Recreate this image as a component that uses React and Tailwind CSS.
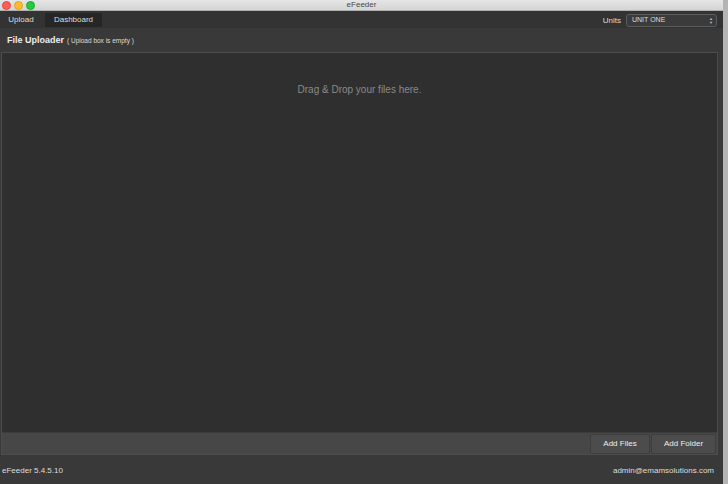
import React from 'react';

const font = { fontFamily: '"Helvetica Neue", "Liberation Sans", Arial, sans-serif' };

const TrafficLights = () => (
    <div className="flex items-center gap-[3px] pl-[2px]">
        <span className="w-[9px] h-[9px] rounded-full bg-[#fc5f57] border border-[#df4744]" />
        <span className="w-[9px] h-[9px] rounded-full bg-[#fdbc2e] border border-[#dea123]" />
        <span className="w-[9px] h-[9px] rounded-full bg-[#28c840] border border-[#1aab29]" />
    </div>
);

export default function App() {
    return (
        <div className="flex w-[728px] h-[484px] bg-[#b4b4b4] overflow-hidden" style={font}>
            <div className="flex flex-col w-[723px] h-full bg-[#393939]">
                {/* Title bar */}
                <div className="relative h-[11px] flex items-center bg-gradient-to-b from-[#e6e6e6] to-[#d4d4d4] border-b border-[#b0b0b0]">
                    <TrafficLights />
                    <div className="absolute inset-0 flex items-center justify-center text-[8px] leading-none text-[#4a4a4a]">eFeeder</div>
                </div>

                {/* Tabs + units */}
                <div className="h-[17px] flex items-center justify-between bg-[#333333] pr-[6px]">
                    <div className="flex items-center h-full gap-[3px]">
                        <div className="h-full w-[42px] flex items-center justify-center text-[8px] text-[#dddddd]">Upload</div>
                        <div className="h-[14px] w-[57px] flex items-center justify-center text-[8px] text-[#dddddd] bg-[#262626]">Dashboard</div>
                    </div>
                    <div className="flex items-center gap-[5px] pt-[2px]">
                        <span className="text-[8px] text-[#dddddd]">Units</span>
                        <div className="w-[91px] h-[13px] rounded-[3px] border border-[#5c5c5c] bg-[#3b3b3b] flex items-center justify-between pl-[5px] pr-[3px]">
                            <span className="text-[7px] text-[#dddddd]">UNIT ONE</span>
                            <span className="flex flex-col items-center leading-none text-[4px] text-[#bbbbbb]">
                                <span>▲</span>
                                <span>▼</span>
                            </span>
                        </div>
                    </div>
                </div>

                {/* Header */}
                <div className="h-[24px] flex items-center px-[7px] gap-[3px] pt-[2px]">
                    <span className="text-[9px] font-bold text-[#eeeeee]">File Uploader</span>
                    <span className="text-[6.5px] text-[#dddddd]">( Upload box is empty )</span>
                </div>

                {/* Drop box */}
                <div className="flex-1 flex flex-col ml-[1px] mr-[5px] border border-[#4d4d4d]">
                    <div className="flex-1 bg-[#2f2f2f] flex justify-center pt-[29px]">
                        <span className="text-[10px] text-[#8a8a8a]">Drag &amp; Drop your files here.</span>
                    </div>
                    <div className="h-[22px] bg-[#474747] border-t border-[#3c3c3c] flex justify-end items-center gap-[1px] pr-[1px]">
                        <button className="h-[20px] w-[60px] bg-[#4c4c4c] border border-[#3e3e3e] rounded-[2px] text-[8px] text-[#eeeeee]">Add Files</button>
                        <button className="h-[20px] w-[65px] bg-[#4c4c4c] border border-[#3e3e3e] rounded-[2px] text-[8px] text-[#eeeeee]">Add Folder</button>
                    </div>
                </div>

                {/* Footer */}
                <div className="h-[29px] flex items-center justify-between px-[2px] pr-[9px] pt-[3px]">
                    <span className="text-[8px] text-[#dddddd]">eFeeder 5.4.5.10</span>
                    <span className="text-[8px] text-[#dddddd]">admin@emamsolutions.com</span>
                </div>
            </div>
        </div>
    );
}
